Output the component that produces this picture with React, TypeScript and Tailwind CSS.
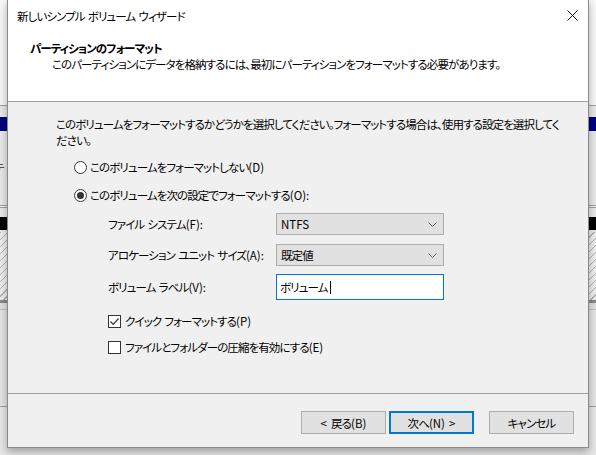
import React from "react";

function L({ children }: { children: React.ReactNode }) {
  return <span className="tracking-[0px]">{children}</span>;
}

function Radio({ checked }: { checked?: boolean }) {
  return (
    <span className="flex h-[13px] w-[13px] shrink-0 items-center justify-center rounded-full border border-[#333333] bg-white">
      {checked && <span className="h-[7px] w-[7px] rounded-full bg-[#333333]" />}
    </span>
  );
}

function Check({ checked }: { checked?: boolean }) {
  return (
    <span className="flex h-[13px] w-[13px] shrink-0 items-center justify-center border border-[#333333] bg-white">
      {checked && (
        <svg width="11" height="11" viewBox="0 0 11 11">
          <path d="M1.5 5.5 L4.3 8.3 L9.5 2.5" fill="none" stroke="#333333" strokeWidth="1.2" />
        </svg>
      )}
    </span>
  );
}

function Chevron() {
  return (
    <svg width="9" height="5" viewBox="0 0 9 5">
      <path d="M0.5 0.5 L4.5 4.5 L8.5 0.5" fill="none" stroke="#606060" strokeWidth="1" />
    </svg>
  );
}

function Combo({ children }: { children: React.ReactNode }) {
  return (
    <div className="flex h-[22px] w-[168px] items-center justify-between border border-[#adadad] bg-[#e1e1e1] pl-[4px] pr-[6px]">
      <span>{children}</span>
      <Chevron />
    </div>
  );
}

function Button({ children, primary }: { children: React.ReactNode; primary?: boolean }) {
  return (
    <div
      className={
        primary
          ? "flex h-[23px] w-[85px] items-center justify-center border-2 border-[#0078d7] bg-[#e1e1e1]"
          : "flex h-[23px] w-[85px] items-center justify-center border border-[#adadad] bg-[#e1e1e1]"
      }
    >
      {children}
    </div>
  );
}

export default function App() {
  return (
    <div className="relative h-[455px] w-[596px] overflow-hidden whitespace-nowrap bg-[#e6e6e6] font-['Noto_Sans_CJK_JP',sans-serif] text-[11.5px] leading-[16px] tracking-[-0.9px] text-black [font-feature-settings:'palt'] [word-spacing:1.5px]">
      {/* background window behind the dialog */}
      <div className="absolute inset-0 flex flex-col">
        <div className="h-[105px] bg-[#f7f7f7]" />
        <div className="h-px bg-[#a0a0a0]" />
        <div className="h-[11px] bg-[#e8e8e8]" />
        <div className="h-[14px] bg-[#000080]" />
        <div className="flex h-[74px] items-center justify-between bg-[#e8e8e8] text-[#333]">
          <span className="-ml-[6px]">テ</span>
          <span className="-mr-[4px] text-[#666]">f</span>
        </div>
        <div className="h-px bg-[#a0a0a0]" />
        <div className="h-px bg-[#f0f0f0]" />
        <div className="h-px bg-[#a0a0a0]" />
        <div className="h-[9px] bg-[#e8e8e8]" />
        <div className="h-[13px] bg-black" />
        <div className="h-[2px] bg-[#e8e8e8]" />
        <div className="h-[68px] bg-[repeating-linear-gradient(135deg,#b0b0b0_0px,#b0b0b0_1px,#eeeeee_1px,#eeeeee_5px)]" />
        <div className="h-[3px] bg-[#888888]" />
        <div className="h-[6px] bg-[#e0e0e0]" />
        <div className="h-px bg-[#c0c0c0]" />
        <div className="h-[96px] bg-[#e4e4e4]" />
        <div className="h-px bg-[#a0a0a0]" />
        <div className="flex-1 bg-[#e6e6e6]" />
      </div>

      {/* dialog window */}
      <div className="absolute left-[7px] top-[-1px] flex h-[449px] w-[582px] flex-col border border-[#8a8a8a] bg-[#f0f0f0] shadow-[0_4px_8px_rgba(0,0,0,0.3)]">
        {/* title + header */}
        <div className="flex h-[101px] flex-col bg-white">
          <div className="flex h-[31px] items-center justify-between pl-[9px] pr-[10px]">
            <span>新しいシンプル ボリューム ウィザード</span>
            <svg width="11" height="11" viewBox="0 0 11 11">
              <path d="M0.5 0.5 L10.5 10.5 M10.5 0.5 L0.5 10.5" stroke="#111" strokeWidth="1" />
            </svg>
          </div>
          <div className="mt-[9px] pl-[22px] font-bold">パーティションのフォーマット</div>
          <div className="pl-[44px]">このパーティションにデータを格納するには、最初にパーティションをフォーマットする必要があります。</div>
        </div>
        <div className="h-px bg-[#a0a0a0]" />

        {/* body */}
        <div className="flex flex-1 flex-col pl-[48px] pr-[20px] pt-[14px]">
          <p className="whitespace-normal">
            このボリュームをフォーマットするかどうかを選択してください。フォーマットする場合は、使用する設定を選択してください。
          </p>
          <div className="ml-[18px] mt-[11px] flex h-[16px] items-center gap-[3px]">
            <Radio />
            <span>このボリュームをフォーマットしない<L>(D)</L></span>
          </div>
          <div className="ml-[18px] mt-[12px] flex h-[16px] items-center gap-[3px]">
            <Radio checked />
            <span>このボリュームを次の設定でフォーマットする<L>(O):</L></span>
          </div>

          <div className="ml-[52px] mt-[10px] flex flex-col">
            <div className="flex items-center">
              <span className="w-[168px]">ファイル システム<L>(F):</L></span>
              <Combo><L>NTFS</L></Combo>
            </div>
            <div className="mt-[9px] flex items-center">
              <span className="w-[168px]">アロケーション ユニット サイズ<L>(A):</L></span>
              <Combo>既定値</Combo>
            </div>
            <div className="mt-[8px] flex items-center">
              <span className="w-[168px]">ボリューム ラベル<L>(V):</L></span>
              <div className="flex h-[26px] w-[168px] items-center border border-[#0078d7] bg-white pl-[3px]">
                <span>ボリューム</span>
                <span className="ml-[2px] h-[13px] w-px bg-black" />
              </div>
            </div>
            <div className="mt-[13px] flex h-[16px] items-center gap-[4px]">
              <Check checked />
              <span>クイック フォーマットする<L>(P)</L></span>
            </div>
            <div className="mt-[10px] flex h-[16px] items-center gap-[4px]">
              <Check />
              <span>ファイルとフォルダーの圧縮を有効にする<L>(E)</L></span>
            </div>
          </div>
        </div>

        {/* footer */}
        <div className="h-px bg-[#a0a0a0]" />
        <div className="flex h-[53px] items-start justify-end pr-[14px] pt-[17px]">
          <Button><L>&lt;&nbsp;</L>戻る<L>(B)</L></Button>
          <div className="ml-[3px]">
            <Button primary>次へ<L>(N)&nbsp;&gt;</L></Button>
          </div>
          <div className="ml-[15px]">
            <Button>キャンセル</Button>
          </div>
        </div>
      </div>
    </div>
  );
}
